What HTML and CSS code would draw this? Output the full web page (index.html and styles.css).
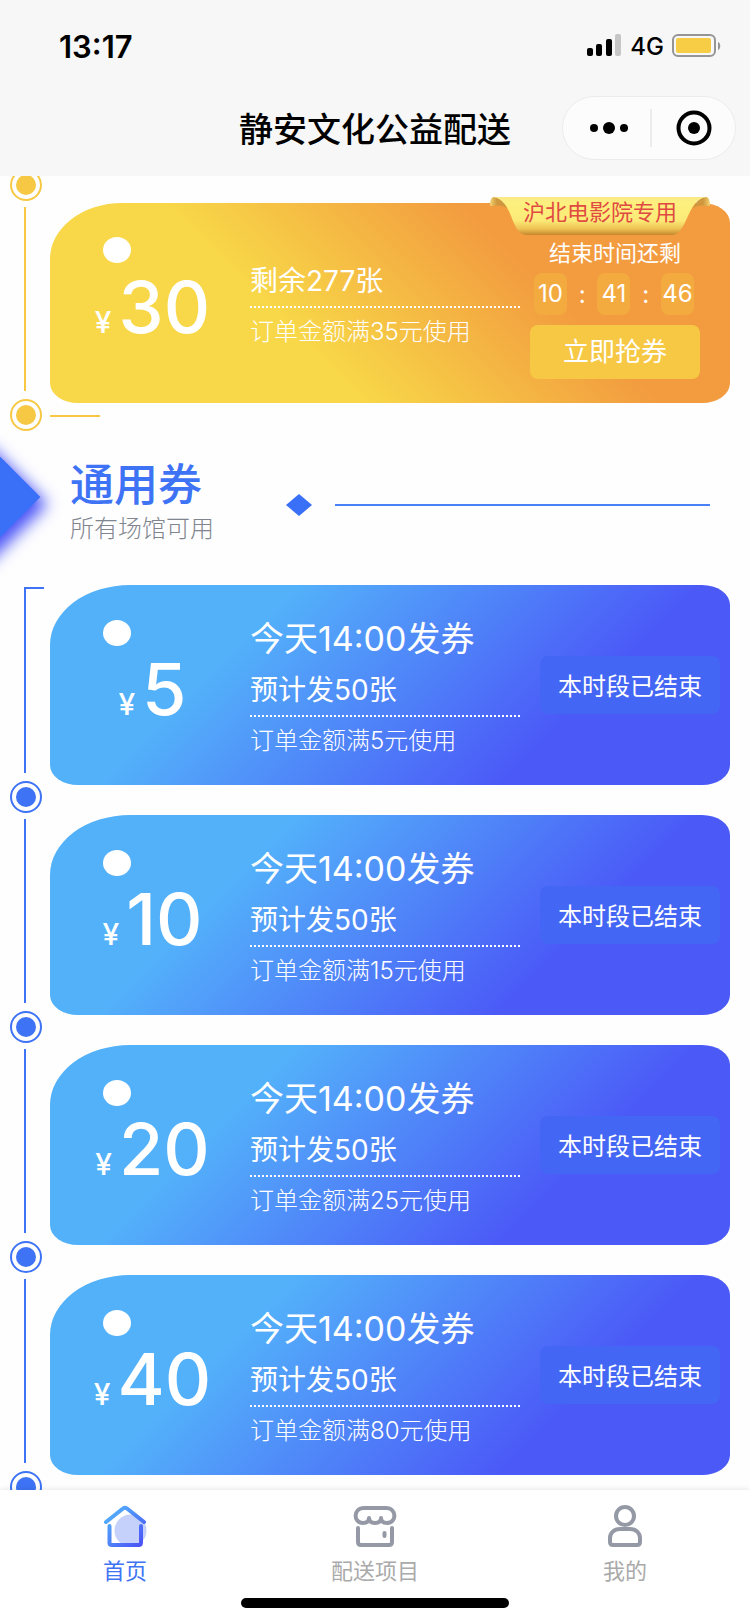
FILE: index.html
```html
<!DOCTYPE html>
<html lang="zh-CN">
<head>
<meta charset="utf-8">
<meta name="viewport" content="width=device-width, initial-scale=1">
<title>静安文化公益配送</title>
<link rel="stylesheet" href="styles.css">
</head>
<body>
<header class="top">
  <div class="status">
    <span class="clock">13:17</span>
    <div class="status-right">
      <svg class="signal" width="36" height="24" viewBox="0 0 36 24" aria-hidden="true">
        <rect x="1" y="14" width="6" height="8" rx="2"/>
        <rect x="10" y="10" width="6" height="12" rx="2"/>
        <rect x="20" y="5" width="6" height="17" rx="2"/>
        <rect x="29" y="0" width="6" height="22" rx="2" fill="#c6c6c6"/>
      </svg>
      <span class="network">4G</span>
      <svg class="battery" width="50" height="24" viewBox="0 0 50 24" aria-hidden="true">
        <rect x="1" y="1" width="42" height="21" rx="5" fill="none" stroke="#959595" stroke-width="2"/>
        <rect x="4" y="4" width="35" height="15" rx="2" fill="#f7cd46"/>
        <path d="M46 8c3 1 3 7 0 8z" fill="#959595"/>
      </svg>
    </div>
  </div>
  <div class="nav">
    <h1 class="nav-title">静安文化公益配送</h1>
    <div class="capsule">
      <button class="capsule-btn" type="button" aria-label="更多">
        <svg width="38" height="14" viewBox="0 0 38 14"><circle cx="4" cy="7" r="4"/><circle cx="19" cy="7" r="6"/><circle cx="34" cy="7" r="4"/></svg>
      </button>
      <button class="capsule-btn" type="button" aria-label="关闭">
        <svg width="36" height="36" viewBox="0 0 36 36"><circle cx="18" cy="18" r="15.500" fill="none" stroke="#000" stroke-width="4"/><circle cx="18" cy="18" r="6"/></svg>
      </button>
    </div>
  </div>
</header>

<main class="content">
  <div class="lead gold"><span class="node"></span></div>

  <section class="row gold last">
    <div class="rail"><span class="line"></span><span class="node"></span></div>
    <article class="card">
      <div class="price"><span class="yen">¥</span><span class="amount">30</span></div>
      <div class="info">
        <p class="stock">剩余277张</p>
        <p class="rule">订单金额满35元使用</p>
      </div>
      <div class="action">
        <p class="label">结束时间还剩</p>
        <div class="countdown"><span class="digit">10</span><span>:</span><span class="digit">41</span><span>:</span><span class="digit">46</span></div>
        <button class="grab" type="button">立即抢券</button>
      </div>
      <div class="ribbon">
        <svg class="ribbon-bg" viewBox="0 0 220 40" preserveAspectRatio="none" aria-hidden="true">
          <defs>
            <linearGradient id="ribbon" x1="0" y1="0" x2="0" y2="1">
              <stop offset="0" stop-color="#fbe88a"/>
              <stop offset=".15" stop-color="#fdf07e"/>
              <stop offset=".62" stop-color="#fcea77"/>
              <stop offset=".84" stop-color="#edc253"/>
              <stop offset="1" stop-color="#c4862d"/>
            </linearGradient>
            <linearGradient id="curl-left">
              <stop offset="0" stop-color="#f3d470"/>
              <stop offset=".4" stop-color="#cf983f"/>
            </linearGradient>
            <linearGradient id="curl-right">
              <stop offset=".6" stop-color="#cf983f"/>
              <stop offset="1" stop-color="#f3d470"/>
            </linearGradient>
          </defs>
          <path d="M0 10C0 5 1 1 4 1c6 0 10 5 13 11-5-3-11-3-17-2z" fill="url(#curl-left)"/>
          <path d="M220 10c0-5-1-9-4-9-6 0-10 5-13 11 5-3 11-3 17-2z" fill="url(#curl-right)"/>
          <path d="M4 1h212c-9 1-14 10-18 19s-8 18-15 19H36c-8-1-11-9-15-19S13 3 4 1z" fill="url(#ribbon)"/>
        </svg>
        <span class="ribbon-text">沪北电影院专用</span>
      </div>
    </article>
  </section>

  <div class="heading">
    <span class="gem-large"></span>
    <div class="heading-text">
      <h2>通用券</h2>
      <p>所有场馆可用</p>
    </div>
    <svg class="gem-small" width="26" height="24" viewBox="0 0 26 24" aria-hidden="true"><path d="M13 1l13 11-13 11L0 12z"/></svg>
    <span class="heading-line"></span>
  </div>

  <section class="row first">
    <div class="rail"><span class="line"></span><span class="node"></span></div>
    <article class="card">
      <div class="price"><span class="yen">¥</span><span class="amount">5</span></div>
      <div class="info">
        <p class="time">今天14:00发券</p>
        <p class="stock">预计发50张</p>
        <p class="rule">订单金额满5元使用</p>
      </div>
      <span class="ended">本时段已结束</span>
    </article>
  </section>

  <section class="row">
    <div class="rail"><span class="line"></span><span class="node"></span></div>
    <article class="card">
      <div class="price"><span class="yen">¥</span><span class="amount">10</span></div>
      <div class="info">
        <p class="time">今天14:00发券</p>
        <p class="stock">预计发50张</p>
        <p class="rule">订单金额满15元使用</p>
      </div>
      <span class="ended">本时段已结束</span>
    </article>
  </section>

  <section class="row">
    <div class="rail"><span class="line"></span><span class="node"></span></div>
    <article class="card">
      <div class="price"><span class="yen">¥</span><span class="amount">20</span></div>
      <div class="info">
        <p class="time">今天14:00发券</p>
        <p class="stock">预计发50张</p>
        <p class="rule">订单金额满25元使用</p>
      </div>
      <span class="ended">本时段已结束</span>
    </article>
  </section>

  <section class="row">
    <div class="rail"><span class="line"></span><span class="node"></span></div>
    <article class="card">
      <div class="price"><span class="yen">¥</span><span class="amount">40</span></div>
      <div class="info">
        <p class="time">今天14:00发券</p>
        <p class="stock">预计发50张</p>
        <p class="rule">订单金额满80元使用</p>
      </div>
      <span class="ended">本时段已结束</span>
    </article>
  </section>
</main>

<footer class="bottom">
  <nav class="tabs">
    <a class="tab active" href="#home">
      <svg width="44" height="44" viewBox="0 0 44 44" aria-hidden="true">
        <defs>
          <linearGradient id="home" gradientUnits="userSpaceOnUse" x1="4" y1="10" x2="36" y2="42">
            <stop offset="0" stop-color="#53b1fa"/>
            <stop offset="1" stop-color="#4b55f7"/>
          </linearGradient>
        </defs>
        <circle cx="27.500" cy="26.500" r="16" fill="#c6d1fb"/>
        <path d="M3 18L20 4.500Q22 3 24 4.500L41 18M6.500 22v17Q6.500 41 9 41h26.500Q38 41 38 38.500V22" fill="none" stroke="url(#home)" stroke-width="4" stroke-linecap="round" stroke-linejoin="round"/>
      </svg>
      <span>首页</span>
    </a>
    <a class="tab" href="#projects">
      <svg width="44" height="44" viewBox="0 0 44 44" fill="none" stroke="#9499a5" stroke-width="4" stroke-linecap="round" stroke-linejoin="round" aria-hidden="true">
        <path d="M11 4h22c11 0 11 15 1 15-4 0-6-2-6-5 0 3-2 5-6 5s-6-2-6-5c0 3-2 5-6 5C0 19 0 4 11 4z"/>
        <path d="M5 24v14q0 3 3 3h28q3 0 3-3V24"/>
        <path d="M31.500 29v3"/>
      </svg>
      <span>配送项目</span>
    </a>
    <a class="tab" href="#mine">
      <svg width="44" height="44" viewBox="0 0 44 44" fill="none" stroke="#9499a5" stroke-width="4" aria-hidden="true">
        <circle cx="22" cy="12" r="9"/>
        <path d="M17 25h10c6 0 10 4 10 9v4q0 3-3 3H10q-3 0-3-3v-4c0-5 4-9 10-9z"/>
      </svg>
      <span>我的</span>
    </a>
  </nav>
  <div class="home-indicator"></div>
</footer>
</body>
</html>
```
FILE: styles.css
```css
* {
  box-sizing: border-box;
}

body {
  --accent: #3e73f5;
  margin: 0;
  height: 100vh;
  display: flex;
  flex-direction: column;
  background: #fefefe;
  color: #000;
  font-family: Inter, "Noto Sans CJK SC", sans-serif;
}

h1, h2, p {
  margin: 0;
}

button {
  border: 0;
  padding: 0;
  font: inherit;
  color: inherit;
  background: none;
}

/* Status bar and title */
.top {
  background: #f7f7f7;
  flex: none;
}

.status {
  height: 80px;
  padding: 12px 28px 0 59px;
  display: flex;
  align-items: center;
  justify-content: space-between;
}

.clock {
  font-size: 31px;
  font-weight: 600;
}

.status-right {
  display: flex;
  align-items: center;
  gap: 8px;
}

.network {
  font-size: 24px;
  font-weight: 500;
}

.nav {
  height: 96px;
  padding-right: 14px;
  display: grid;
  grid-template-columns: 1fr auto 1fr;
  align-items: center;
}

.nav-title {
  grid-column: 2;
  margin-left: 14px;
  padding-top: 3px;
  font-size: 34px;
  line-height: 48px;
  font-weight: 500;
}

.capsule {
  justify-self: end;
  width: 174px;
  height: 64px;
  display: flex;
  align-items: center;
  border: 1px solid #ececec;
  border-radius: 32px;
  background: #fcfcfc;
}

.capsule-btn {
  flex: 1;
  height: 38px;
  padding-left: 4px;
  display: flex;
  align-items: center;
  justify-content: center;
}

.capsule-btn + .capsule-btn {
  padding-left: 0;
  border-left: 2px solid #ececec;
}

/* Coupon list */
.content {
  flex: 1;
  min-height: 0;
  overflow-y: auto;
  scrollbar-width: none;
}

.gold {
  --accent: #f6c844;
}

.lead {
  height: 27px;
  padding: 0 0 2px 10px;
  display: flex;
  align-items: flex-end;
  overflow: hidden;
}

.node {
  flex: none;
  width: 32px;
  height: 32px;
  border: 2px solid var(--accent);
  border-radius: 50%;
  padding: 4px;
  background: var(--accent) content-box;
}

.row {
  display: grid;
  grid-template-columns: 50px 1fr;
  padding-right: 20px;
}

.rail {
  position: relative;
  padding: 4px 0 2px 10px;
  display: flex;
  flex-direction: column;
  gap: 8px;
}

.line {
  flex: 1;
  width: 16px;
  border-right: 2px solid var(--accent);
}

.first .rail {
  padding-top: 2px;
}

.first .line::before,
.last .rail::after {
  content: "";
  position: absolute;
  height: 2px;
  background: var(--accent);
}

.first .line::before {
  top: 2px;
  left: 24px;
  width: 20px;
}

.last .rail::after {
  bottom: 16px;
  left: 50px;
  width: 50px;
}

.card {
  position: relative;
  min-height: 200px;
  margin-bottom: 30px;
  display: grid;
  grid-template-columns: 200px 270px 1fr;
  align-items: center;
  color: #fff;
  background: linear-gradient(135deg, #53b1fa 28%, #4b59f7 74%);
  border-radius: 80px 28px 28px 28px / 60px 20px 20px 20px;
}

.gold .card {
  background: linear-gradient(45deg, #f8d748 36%, #f29b3f 70%);
  border-radius: 72px 28px 28px 28px / 56px 20px 20px 20px;
}

.card::before {
  content: "";
  position: absolute;
  top: 35px;
  left: 53px;
  width: 28px;
  height: 26px;
  border-radius: 50%;
  background: #fff;
}

.gold .card::before {
  top: 34px;
}

.price {
  padding: 8px 0 0 5px;
  display: flex;
  align-items: baseline;
  justify-content: center;
  gap: 7px;
  font-weight: 500;
}

.yen {
  font-size: 30px;
}

.amount {
  font-size: 72px;
  line-height: 80px;
}

.info {
  padding-top: 8px;
  white-space: nowrap;
}

.gold .info {
  padding-top: 6px;
}

.time {
  font-size: 34px;
  line-height: 52px;
}

.stock {
  font-size: 28px;
  line-height: 50px;
  border-bottom: 2px dotted #fff;
}

.rule {
  font-size: 24px;
  line-height: 48px;
  font-weight: 300;
}

.ended {
  justify-self: end;
  width: 180px;
  margin-right: 10px;
  padding-top: 3px;
  font-size: 24px;
  line-height: 55px;
  text-align: center;
  border-radius: 8px;
  background: #4466f5;
}

.action {
  justify-self: end;
  width: 170px;
  margin: 36px 30px 24px 0;
}

.label {
  font-size: 22px;
  line-height: 28px;
  text-align: center;
}

.countdown {
  padding: 6px 6px 10px 4px;
  display: flex;
  align-items: center;
  justify-content: space-between;
  font-size: 24px;
}

.digit {
  width: 33px;
  line-height: 42px;
  text-align: center;
  border-radius: 8px;
  background: #f3ab40;
}

.grab {
  width: 100%;
  font-size: 26px;
  line-height: 54px;
  border-radius: 8px;
  background: #f6c844;
}

.ribbon {
  position: absolute;
  top: -7px;
  right: 20px;
  width: 220px;
  height: 40px;
  text-align: center;
}

.ribbon-bg {
  position: absolute;
  inset: 0;
  width: 100%;
  height: 100%;
}

.ribbon-text {
  position: relative;
  font-size: 22px;
  line-height: 32px;
  color: #df4a42;
}

/* Section heading */
.heading {
  position: relative;
  padding: 28px 40px 36px 70px;
  display: flex;
  align-items: center;
}

.heading-text {
  flex: none;
  width: 216px;
}

.heading h2 {
  font-size: 44px;
  line-height: 48px;
  font-weight: 500;
  color: #3e73f5;
}

.heading p {
  font-size: 24px;
  line-height: 40px;
  font-weight: 300;
  color: #80858f;
}

.gem-large {
  position: absolute;
  left: -61px;
  top: 22px;
  width: 84px;
  height: 84px;
  background: #3a70f7;
  box-shadow: 10px 0 16px #4b55f7;
  transform: rotate(45deg);
}

.gem-small {
  flex: none;
  margin-right: 23px;
  fill: #3a70f7;
}

.heading-line {
  flex: 1;
  height: 2px;
  background: #4a80f8;
}

/* Tab bar */
.bottom {
  position: relative;
  flex: none;
  padding: 14px 0 16px;
  background: #fff;
  box-shadow: 0 0 6px rgba(0, 0, 0, 0.12);
}

.tabs {
  display: grid;
  grid-template-columns: repeat(3, 1fr);
}

.tab {
  display: flex;
  flex-direction: column;
  align-items: center;
  gap: 6px;
  font-size: 22px;
  line-height: 34px;
  color: #aaa;
  text-decoration: none;
}

.active {
  color: #3e73f5;
}

.home-indicator {
  width: 268px;
  height: 10px;
  margin: 10px auto 0;
  border-radius: 5px;
  background: #000;
}
```
